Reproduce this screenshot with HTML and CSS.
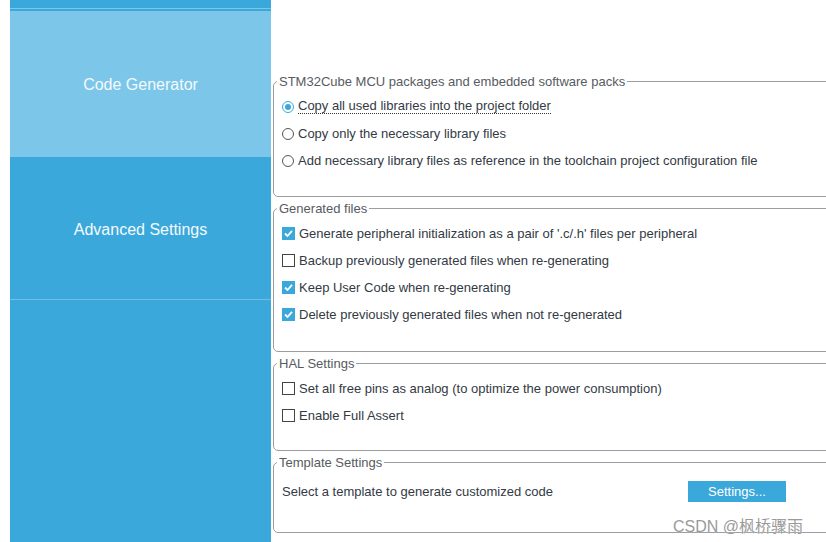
FILE: index.html
```html
<!DOCTYPE html>
<html lang="en">
<head>
<meta charset="UTF-8">
<meta name="viewport" content="width=device-width, initial-scale=1.0">
<link rel="stylesheet" href="styles.css">
</head>
<body>

<div class="page">
    <!-- left side menu -->
    <div class="menu">
        <div class="menu-top"></div>
        <div class="menu-item active">Code Generator</div>
        <div class="menu-item">Advanced Settings</div>
        <div class="menu-rest"></div>
    </div>

    <!-- the settings panel -->
    <div class="panel">
        <fieldset class="box box-packs">
            <legend>STM32Cube MCU packages and embedded software packs</legend>
            <div class="row"><span class="radio on"></span><span class="focus">Copy all used libraries into the project folder</span></div>
            <div class="row"><span class="radio"></span>Copy only the necessary library files</div>
            <div class="row"><span class="radio"></span>Add necessary library files as reference in the toolchain project configuration file</div>
        </fieldset>

        <fieldset class="box box-files">
            <legend>Generated files</legend>
            <div class="row"><span class="check on"><svg viewBox="0 0 13 13"><path d="M3 6.5 L5.5 9 L10 3.8" /></svg></span>Generate peripheral initialization as a pair of '.c/.h' files per peripheral</div>
            <div class="row"><span class="check"></span>Backup previously generated files when re-generating</div>
            <div class="row"><span class="check on"><svg viewBox="0 0 13 13"><path d="M3 6.5 L5.5 9 L10 3.8" /></svg></span>Keep User Code when re-generating</div>
            <div class="row"><span class="check on"><svg viewBox="0 0 13 13"><path d="M3 6.5 L5.5 9 L10 3.8" /></svg></span>Delete previously generated files when not re-generated</div>
        </fieldset>

        <fieldset class="box box-hal">
            <legend>HAL Settings</legend>
            <div class="row"><span class="check"></span>Set all free pins as analog (to optimize the power consumption)</div>
            <div class="row"><span class="check"></span>Enable Full Assert</div>
        </fieldset>

        <fieldset class="box box-template">
            <legend>Template Settings</legend>
            <div class="row template-row">
                <span class="template-text">Select a template to generate customized code</span>
                <button class="btn">Settings...</button>
            </div>
        </fieldset>
    </div>
</div>

<span class="mark">CSDN @枫桥骤雨</span>

</body>
</html>
```

FILE: styles.css
```css
* {
    box-sizing: border-box;
}
html, body {
    margin: 0;
    height: 100%;
    overflow: hidden;
    background-color: white;
    font-family: "Liberation Sans", Arial, sans-serif;
}
.page {
    display: flex;
    height: 542px;
    padding-left: 10px;
    overflow: hidden;
}

/* left menu */
.menu {
    width: 261px;
    flex-shrink: 0;
    display: flex;
    flex-direction: column;
    background-color: #3aa8db;
}
.menu-top {
    height: 11px;
    border-top: 8px solid #3aa8db;
    border-bottom: 2px solid #3aa8db;
    background-color: #7bc6e9;
}
.menu-item {
    display: flex;
    align-items: center;
    justify-content: center;
    color: #f4fafd;
    font-size: 16px;
    height: 143px;
    padding-top: 4px;
    background-color: #3aa8db;
    border-bottom: 1px solid #6fbfe5;
}
.menu-item.active {
    height: 146px;
    padding-top: 2px;
    background-color: #7bc6e9;
    border-bottom: none;
}
.menu-rest {
    flex: 1;
}

/* right panel */
.panel {
    width: 600px;
    flex-shrink: 0;
    padding-top: 74px;
    padding-left: 2px;
    display: flex;
    flex-direction: column;
    gap: 4px;
}
.box {
    margin: 0;
    padding: 4px 0 0 8px;
    border: 1px solid #9a9ea3;
    border-radius: 5px;
    font-size: 13px;
    color: #333a44;
}
.box legend {
    padding: 0 2px;
    margin-left: -5px;
    line-height: 15px;
    color: #575b61;
}
.box-packs { height: 123px; }
.box-files { height: 151px; }
.box-hal { height: 95px; }
.box-template { height: 78px; }

.row {
    height: 27px;
    display: flex;
    align-items: center;
    gap: 4px;
    white-space: nowrap;
}
.focus {
    border-bottom: 1px dotted #333;
    line-height: 14px;
}

/* radio buttons and check boxes */
.radio {
    width: 12px;
    height: 12px;
    border: 1px solid #555;
    border-radius: 50%;
    background-color: white;
    display: flex;
    align-items: center;
    justify-content: center;
}
.radio.on {
    border-color: #3aa8db;
}
.radio.on::after {
    content: "";
    width: 6px;
    height: 6px;
    border-radius: 50%;
    background-color: #3aa8db;
}
.check {
    width: 13px;
    height: 13px;
    border: 1px solid #444;
    background-color: white;
    display: flex;
}
.check.on {
    border: none;
    background-color: #3aa8db;
}
.check svg {
    width: 13px;
    height: 13px;
}
.check path {
    fill: none;
    stroke: white;
    stroke-width: 1.8;
}

.template-row {
    margin-top: 4px;
}
.template-text {
    width: 402px;
}
.btn {
    width: 98px;
    height: 21px;
    border: none;
    background-color: #3aa8db;
    color: white;
    font-family: "Liberation Sans", Arial, sans-serif;
    font-size: 13px;
    padding: 0;
}

/* watermark in the corner */
.mark {
    position: absolute;
    left: 673px;
    top: 513px;
    font-size: 16px;
    color: #9a9a9a;
    font-family: "Liberation Sans", "Noto Sans CJK SC", sans-serif;
    text-shadow: 0 0 1px white;
}
```
